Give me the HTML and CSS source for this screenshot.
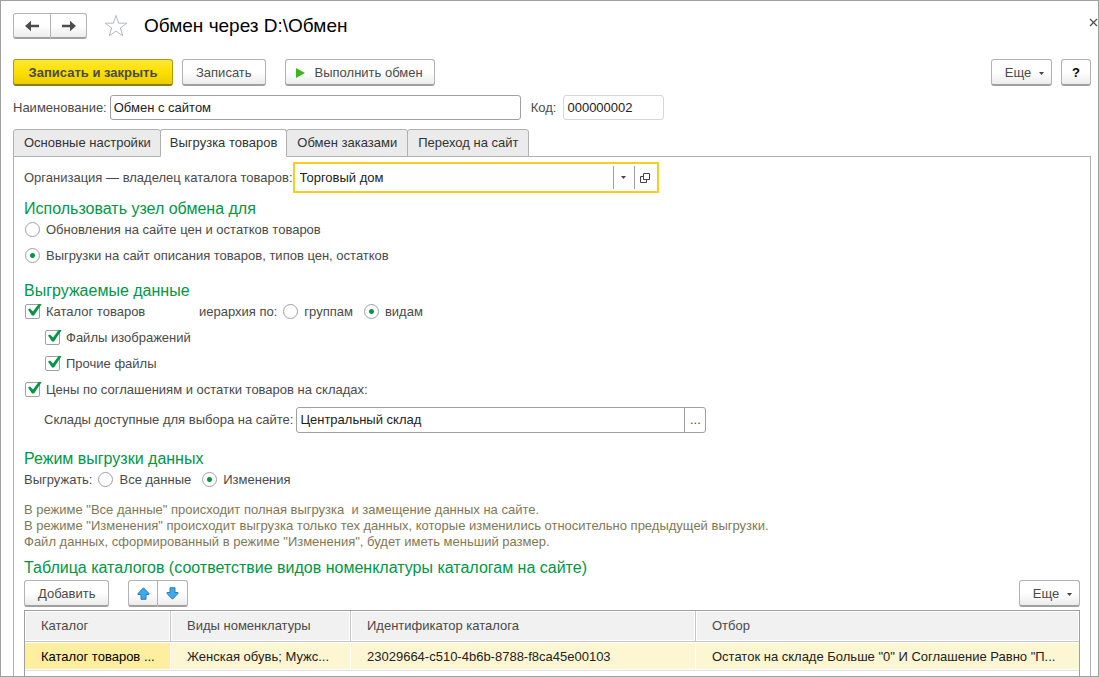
FILE: index.html
```html
<!DOCTYPE html>
<html lang="ru">
<head>
<meta charset="utf-8">
<title>Обмен через D:\Обмен</title>
<link rel="stylesheet" href="styles.css">
</head>
<body>
<main class="window">
  <header class="titlebar">
    <div class="btn-group">
      <button class="btn nav-btn" type="button" aria-label="Назад">
        <svg width="16" height="12" viewBox="0 0 16 12"><path d="M1 6 7 .8V4.8H15V7.2H7V11.2Z" fill="#4d4d4d"/></svg>
      </button>
      <button class="btn nav-btn" type="button" aria-label="Вперед">
        <svg width="16" height="12" viewBox="0 0 16 12"><path d="M15 6 9 .8V4.8H1V7.2H9V11.2Z" fill="#4d4d4d"/></svg>
      </button>
    </div>
    <button class="icon-btn star" type="button" aria-label="В избранное">
      <svg width="24" height="24" viewBox="0 0 24 24"><path d="M12 1.5 14.7 9.2H22.8L16.3 14 18.8 21.8 12 17.1 5.2 21.8 7.7 14 1.2 9.2H9.3Z" fill="#fff" stroke="#b3bac1" stroke-width="1"/></svg>
    </button>
    <h1 class="title">Обмен через D:\Обмен</h1>
    <button class="icon-btn close" type="button" aria-label="Закрыть">
      <svg width="9" height="9" viewBox="0 0 9 9"><path d="M1 1 8 8M8 1 1 8" fill="none" stroke="#4d4d4d" stroke-width="1.2"/></svg>
    </button>
  </header>

  <div class="commands">
    <button class="btn primary" type="button">Записать и закрыть</button>
    <button class="btn" type="button">Записать</button>
    <button class="btn run" type="button">
      <svg width="9" height="10" viewBox="0 0 9 10"><path d="M0 0 9 5 0 10Z" fill="#3fb618"/></svg>
      Выполнить обмен
    </button>
    <button class="btn more push" type="button">Еще
      <svg width="5" height="3" viewBox="0 0 5 3"><path d="M0 0H5L2.5 3Z" fill="#444"/></svg>
    </button>
    <button class="btn help" type="button">?</button>
  </div>

  <div class="name-row">
    <label for="name">Наименование:</label>
    <input class="field name" id="name" type="text" value="Обмен с сайтом">
    <label class="code-label" for="code">Код:</label>
    <input class="field code" id="code" type="text" value="000000002">
  </div>

  <div class="tabs" role="tablist">
    <button class="tab" type="button" role="tab">Основные настройки</button>
    <button class="tab active" type="button" role="tab" aria-selected="true">Выгрузка товаров</button>
    <button class="tab" type="button" role="tab">Обмен заказами</button>
    <button class="tab" type="button" role="tab">Переход на сайт</button>
  </div>

  <section class="panel" role="tabpanel">
    <div class="org-row">
      <label for="org">Организация — владелец каталога товаров:</label>
      <div class="combo focused">
        <input class="combo-input" id="org" type="text" value="Торговый дом">
        <button class="combo-btn" type="button" aria-label="Выбрать">
          <svg width="5" height="3" viewBox="0 0 5 3"><path d="M0 0H5L2.5 3Z" fill="#444"/></svg>
        </button>
        <button class="combo-btn" type="button" aria-label="Открыть">
          <svg width="10" height="10" viewBox="0 0 10 10"><path d="M3.5.5H9.5V6.5H3.5ZM3.5 3.5H.5V9.5H6.5V6.5" fill="none" stroke="#444"/></svg>
        </button>
      </div>
    </div>

    <h2 class="heading">Использовать узел обмена для</h2>
    <label class="option"><input class="radio" type="radio" name="node">Обновления на сайте цен и остатков товаров</label>
    <label class="option"><input class="radio" type="radio" name="node" checked>Выгрузки на сайт описания товаров, типов цен, остатков</label>

    <h2 class="heading spaced">Выгружаемые данные</h2>
    <div class="option-row">
      <label class="option catalog"><input class="check" type="checkbox" checked>Каталог товаров</label>
      <span class="caption">иерархия по:</span>
      <label class="option"><input class="radio" type="radio" name="tree">группам</label>
      <label class="option next"><input class="radio" type="radio" name="tree" checked>видам</label>
    </div>
    <label class="option nested"><input class="check" type="checkbox" checked>Файлы изображений</label>
    <label class="option nested"><input class="check" type="checkbox" checked>Прочие файлы</label>
    <label class="option"><input class="check" type="checkbox" checked>Цены по соглашениям и остатки товаров на складах:</label>
    <div class="stock-row">
      <label for="stock">Склады доступные для выбора на сайте:</label>
      <div class="combo">
        <input class="combo-input" id="stock" type="text" value="Центральный склад">
        <button class="combo-btn" type="button" aria-label="Выбрать склады">...</button>
      </div>
    </div>

    <h2 class="heading far">Режим выгрузки данных</h2>
    <div class="option-row">
      <span class="caption">Выгружать:</span>
      <label class="option"><input class="radio" type="radio" name="mode">Все данные</label>
      <label class="option next"><input class="radio" type="radio" name="mode" checked>Изменения</label>
    </div>
    <p class="note">В режиме "Все данные" происходит полная выгрузка&nbsp; и замещение данных на сайте.<br>
      В режиме "Изменения" происходит выгрузка только тех данных, которые изменились относительно предыдущей выгрузки.<br>
      Файл данных, сформированный в режиме "Изменения", будет иметь меньший размер.</p>

    <h2 class="heading table-heading">Таблица каталогов (соответствие видов номенклатуры каталогам на сайте)</h2>
    <div class="table-tools">
      <button class="btn add" type="button">Добавить</button>
      <div class="btn-group">
        <button class="btn move" type="button" aria-label="Вверх">
          <svg width="13" height="13" viewBox="0 0 13 13"><path d="M6.5.8 12 6.5V7.5H9V12.3H4V7.5H1V6.5Z" fill="#3fa9ec" stroke="#2b7cb5"/></svg>
        </button>
        <button class="btn move" type="button" aria-label="Вниз">
          <svg width="13" height="13" viewBox="0 0 13 13"><path d="M6.5 12.2 12 6.5V5.5H9V.7H4V5.5H1V6.5Z" fill="#3fa9ec" stroke="#2b7cb5"/></svg>
        </button>
      </div>
      <button class="btn more push" type="button">Еще
        <svg width="5" height="3" viewBox="0 0 5 3"><path d="M0 0H5L2.5 3Z" fill="#444"/></svg>
      </button>
    </div>

    <div class="grid-box">
      <table class="grid">
        <colgroup><col class="c-catalog"><col class="c-kinds"><col class="c-id"><col></colgroup>
        <thead>
          <tr><th>Каталог</th><th>Виды номенклатуры</th><th>Идентификатор каталога</th><th>Отбор</th></tr>
        </thead>
        <tbody>
          <tr><td class="current">Каталог товаров ...</td><td>Женская обувь; Мужс...</td><td>23029664-c510-4b6b-8788-f8ca45e00103</td><td>Остаток на складе Больше "0" И Соглашение Равно "П...</td></tr>
        </tbody>
      </table>
    </div>
  </section>
</main>
</body>
</html>
```
FILE: styles.css
```css
* { box-sizing: border-box; }

body {
  margin: 0;
  background: #fff;
  color: #4a4a4a;
  font: 13px/16px "Liberation Sans", Arial, sans-serif;
}

button, input { margin: 0; font: inherit; color: inherit; }
svg { display: block; flex: none; }

.window {
  display: flex;
  flex-direction: column;
  min-height: 100vh;
  padding: 12px 7px 0 12px;
  border: 1px solid #a0a0a0;
}

.titlebar { display: flex; align-items: center; height: 26px; }

.btn {
  display: inline-flex;
  align-items: center;
  justify-content: center;
  height: 27px;
  padding: 2px 13px 0;
  border: 1px solid #b3b3b3;
  border-bottom: 2px solid #a0a0a0;
  border-radius: 3px;
  background: linear-gradient(#fff 50%, #ececec);
}

.btn-group { display: flex; }
.btn-group .btn:first-child { border-top-right-radius: 0; border-bottom-right-radius: 0; }
.btn-group .btn + .btn { border-left: 0; border-top-left-radius: 0; border-bottom-left-radius: 0; }
.nav-btn { width: 38px; height: 26px; padding: 0; }
.nav-btn + .nav-btn { width: 36px; }

.icon-btn { padding: 0; border: 0; background: none; }
.star { margin-left: 17px; }
.title { margin: 0 0 0 16px; color: #000; font-size: 19px; font-weight: 400; line-height: 24px; }
.close { align-self: flex-start; margin: 5px -7px 0 auto; }

.commands { display: flex; margin-top: 20px; }
.primary {
  width: 160px;
  margin-right: 9px;
  padding: 2px 0 0;
  border-color: #b09a10;
  border-bottom-color: #8f7d10;
  background: linear-gradient(#ffe838, #fddf00 50%, #eccd00);
  font-weight: 700;
}
.run { gap: 10px; margin-left: 19px; padding: 2px 11px 0 10px; }
.more { gap: 8px; width: 61px; padding: 2px 6px 0 12px; }
.push { margin-left: auto; }
.help { width: 30px; margin-left: 9px; padding: 2px 0 0; color: #000; font-weight: 700; }

.name-row { display: flex; align-items: center; margin-top: 9px; }
.field {
  height: 25px;
  padding: 0 3px;
  border: 1px solid #a0a0a0;
  border-radius: 3px;
  color: #222;
}
.name { width: 411px; margin-left: 3px; }
.code-label { margin-left: 10px; }
.code { width: 101px; margin-left: 7px; border-color: #d6d6d6; }

.tabs { display: flex; position: relative; margin-top: 9px; }
.tab {
  height: 28px;
  margin-left: -1px;
  padding: 0 10px;
  border: 1px solid #b0b0b0;
  border-radius: 3px 3px 0 0;
  background: #ebebeb;
  color: #333;
}
.tab:first-child { margin-left: 0; padding-right: 9px; }
.tab.active { z-index: 1; padding: 0 9px; border-bottom-color: #fff; background: #fff; }

.panel {
  display: flex;
  flex: 1;
  flex-direction: column;
  margin-top: -1px;
  padding: 5px 10px 0;
  border: 1px solid #b0b0b0;
  border-bottom: 0;
}

.org-row, .stock-row { display: flex; align-items: center; }
.org-row .combo { width: 366px; }
.stock-row { margin: 4px 0 0 20px; }
.stock-row .combo { width: 410px; margin-left: 3px; }

.combo { display: flex; height: 26px; border: 1px solid #a0a0a0; border-radius: 3px; }
.combo-input {
  flex: 1;
  min-width: 0;
  padding: 0 3px;
  border: 0;
  background: none;
  color: #222;
}
.combo-btn {
  display: flex;
  align-items: center;
  justify-content: center;
  width: 21px;
  padding: 0;
  border: 0;
  border-left: 1px solid #a0a0a0;
  background: none;
}
.focused { height: 31px; padding: 2px; border: 2px solid #fccb1b; border-radius: 0; }

.heading { margin: 8px 0 0; color: #009646; font-size: 16px; font-weight: 400; line-height: 16px; }
.heading.spaced { margin-top: 14px; }
.heading.far { margin-top: 18px; }
.heading.table-heading { margin-top: 10px; }

.option { display: flex; align-items: center; gap: 6px; height: 26px; }
.option-row { display: flex; align-items: center; }
.nested { margin-left: 20px; }
.catalog { width: 175px; }
.caption { margin-right: 5px; }
.next { margin-left: 10px; }

.radio, .check {
  flex: none;
  width: 15px;
  height: 15px;
  margin: 0 0 2px 1px;
  border: 1px solid #a0a0a0;
  background: #fff;
  appearance: none;
}
.radio { border-radius: 50%; }
.radio:checked { background: radial-gradient(circle, #009646 2px, #fff 3px); }
.check { position: relative; border-radius: 2px; }
.check:checked::after {
  content: "";
  position: absolute;
  left: 2px;
  top: -1px;
  width: 14px;
  height: 13px;
  background: #009646;
  clip-path: polygon(0 6px, 2px 5px, 5px 8px, 11px 0, 14px 0, 6px 12px, 4px 12px);
}

.note { margin: 9px 0 0; color: #7f7856; }

.table-tools { display: flex; margin-top: 4px; }
.add { margin-right: 19px; }
.move { width: 30px; padding: 0; }

.grid-box { flex: 1; margin-top: 3px; border: 1px solid #a0a0a0; border-bottom: 0; }
.grid { width: 100%; border-collapse: separate; border-spacing: 0; table-layout: fixed; }
.c-catalog { width: 146px; }
.c-kinds { width: 180px; }
.c-id { width: 345px; }
.grid th, .grid td {
  overflow: hidden;
  padding: 0 16px;
  text-align: left;
  white-space: nowrap;
}
.grid th {
  height: 31px;
  border-right: 1px solid #c6c6c6;
  border-bottom: 1px solid #c6c6c6;
  background: #f1f1f1;
  box-shadow: inset 0 0 0 1px #fff;
  font-weight: 400;
}
.grid td {
  height: 29px;
  padding: 2px 0 0 16px;
  border-right: 1px solid #fff;
  border-bottom: 1px solid #e0e0e0;
  background: #fdf6d2;
  box-shadow: inset 0 -1px #fff, inset 0 1px #fff;
  color: #222;
}
.grid .current { background: #fdeea0; color: #000; }
.grid th:last-child, .grid td:last-child { border-right: 0; }
```
